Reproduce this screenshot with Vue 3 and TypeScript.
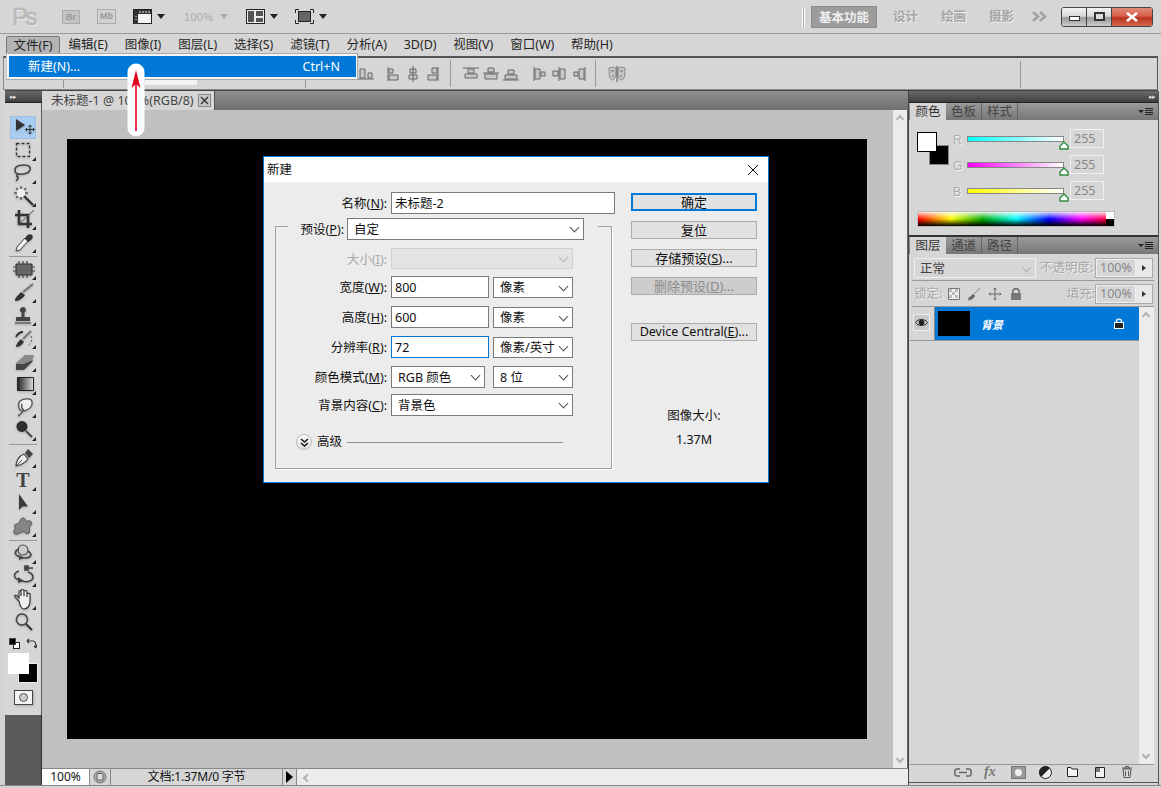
<script setup lang="ts">
interface Shape { d: string; f?: string; s?: string; w?: number; dash?: string }
interface Tool { name: string; flag: boolean; active?: boolean; text?: string; shapes: Shape[] }

const menus = ['文件(F)', '编辑(E)', '图像(I)', '图层(L)', '选择(S)', '滤镜(T)', '分析(A)', '3D(D)', '视图(V)', '窗口(W)', '帮助(H)']
const workspaces = ['设计', '绘画', '摄影']

const dark = '#3f3f3f'
const groups: Tool[][] = [
  [
    { name: 'move', flag: false, active: true, shapes: [
      { d: 'M6 3V15L15 9Z', f: '#333' },
      { d: 'M20 9V18M15.5 13.5H24.5M18.5 10.5L20 9L21.5 10.5M18.5 16.5L20 18L21.5 16.5M17 12L15.5 13.5L17 15M23 12L24.5 13.5L23 15', s: '#333', w: 1, f: 'none' },
    ] },
    { name: 'marquee', flag: true, shapes: [{ d: 'M6.5 4.5H19.5V17.5H6.5Z', s: '#333', w: 1.4, dash: '3 2', f: 'none' }] },
    { name: 'lasso', flag: true, shapes: [
      { d: 'M5 8C5 4 10 3 14 3C19 3 21 5 20 8C19 11 13 13 9 12C6 12 5 10 5 8Z', s: '#444', w: 1.6, f: 'none' },
      { d: 'M9 12C6 13 6 15 8 15C9 16 7 18 6 19', s: '#444', w: 1.6, f: 'none' },
    ] },
    { name: 'wand', flag: true, shapes: [
      { d: 'M7 4H15V12H7Z', f: '#efefef' },
      { d: 'M11 1V4M11 12V15M4 8H7M15 8H18M6 3L8 5M16 3L14 5M6 13L8 11', s: '#555', w: 1.4, f: 'none' },
      { d: 'M14 11L23 20', s: '#333', w: 2.4, f: 'none' },
    ] },
    { name: 'crop', flag: true, shapes: [
      { d: 'M9 2V16H22M5 7H18V20', s: '#333', w: 2.6, f: 'none' },
      { d: 'M8 17L24 2', s: '#555', w: 1, f: 'none' },
    ] },
    { name: 'eyedropper', flag: true, shapes: [
      { d: 'M15 7L7 16L6 20L10 19L18 10Z', f: '#f2f2f2', s: '#444', w: 1 },
      { d: 'M15 8C16 4 20 2 22 4C24 6 22 9 18 11Z', f: '#333' },
    ] },
  ],
  [
    { name: 'healing', flag: true, shapes: [
      { d: 'M6 6H22V17H6Z', f: '#666', s: '#333', w: 1 },
      { d: 'M9 3V6M13 3V6M17 3V6M9 17V20M13 17V20M17 17V20M3 9H6M3 13H6M22 9H25M22 13H25', s: '#444', w: 1.2, f: 'none' },
    ] },
    { name: 'brush', flag: true, shapes: [
      { d: 'M5 20C5 16 8 15 11 11L15 14C12 18 9 20 5 20Z', f: '#333' },
      { d: 'M13 11L23 3', s: '#777', w: 2.2, f: 'none' },
    ] },
    { name: 'stamp', flag: true, shapes: [
      { d: 'M13 3A3 3 0 1 1 12.9 3ZM11.5 8H14.5V13H11.5Z', f: '#444' },
      { d: 'M6 13H20V17H6Z', f: '#444' },
      { d: 'M5 18H21V20H5Z', f: '#777' },
    ] },
    { name: 'history', flag: true, shapes: [
      { d: 'M6 20C6 17 8 15 11 12L14 15C12 18 9 20 6 20Z', f: '#333' },
      { d: 'M13 12L21 4', s: '#777', w: 2, f: 'none' },
      { d: 'M6 10C8 6 11 5 13 5', s: '#333', w: 1.8, f: 'none' },
      { d: 'M21 9C23 13 21 17 17 19', s: '#555', w: 1, dash: '2 2', f: 'none' },
    ] },
    { name: 'eraser', flag: true, shapes: [
      { d: 'M6 13L15 5H24L22 11L14 19H6Z', f: '#8a8a8a' },
      { d: 'M6 14H14V20H6ZM14 14L23 10L22 12L14 20Z', f: '#444' },
    ] },
    { name: 'gradient', flag: true, shapes: [{ d: 'M7.5 4.5H23.5V17.5H7.5Z', f: 'url(#toolGrad)', s: '#222', w: 1 }] },
    { name: 'dodge', flag: true, shapes: [
      { d: 'M10 5C14 2 22 2 22 6C23 11 17 15 13 15C9 15 7 9 10 5Z', f: '#eee', s: '#555', w: 1.3 },
      { d: 'M13 15C12 17 10 19 8 20M12 8C11 11 12 13 14 14', s: '#555', w: 1.5, f: 'none' },
    ] },
    { name: 'burn', flag: true, shapes: [
      { d: 'M12 2A5.5 5.5 0 1 1 11.9 2Z', f: '#2f2f2f' },
      { d: 'M16 12L22 18', s: '#444', w: 1.8, f: 'none' },
    ] },
  ],
  [
    { name: 'pen', flag: true, shapes: [
      { d: 'M14 8L18 13C15 17 11 19 6 20C6 15 9 10 14 8Z', f: '#eee', s: '#444', w: 1.2 },
      { d: 'M15 7L18 3L23 8L19 12Z', f: '#444' },
      { d: 'M6 20L12 14', s: '#444', w: 1, f: 'none' },
    ] },
    { name: 'type', flag: true, text: 'T', shapes: [] },
    { name: 'path', flag: true, shapes: [{ d: 'M9 2V18L12.5 14.5L18 14.5Z', f: '#3a3a3a' }] },
    { name: 'shape', flag: true, shapes: [{ d: 'M7 9C10 9 10 3 13 3C16 3 15 7 18 6C22 5 23 9 20 11C18 13 21 15 19 18C16 20 15 16 12 17C9 18 6 21 4 18C3 15 6 14 5 12C4 10 5 9 7 9Z', f: '#858585', s: '#555', w: 1 }] },
  ],
  [
    { name: '3d-rotate', flag: true, shapes: [
      { d: 'M13 3A5 5 0 1 1 12.9 3Z', f: '#ccc', s: '#555', w: 1.2 },
      { d: 'M9 7C4 9 4 13 10 15C15 17 20 16 21 13C21 11 19 10 18 9', s: '#444', w: 1.6, f: 'none' },
      { d: 'M9 13L14 16L9 18Z', f: '#444' },
    ] },
    { name: '3d-orbit', flag: true, shapes: [
      { d: 'M15 3H23M15 1H18V5H15Z', s: '#444', w: 1.6, f: '#444' },
      { d: 'M9 6C3 8 3 13 9 15C15 18 23 17 23 12C23 10 21 8 18 7', s: '#444', w: 1.6, f: 'none' },
      { d: 'M8 12L14 16L8 18Z', f: '#444' },
    ] },
    { name: 'hand', flag: true, shapes: [{ d: 'M9 13L5 9C4 7 6 7 7 8L9 10V4C9 2 11 2 11 4V8V3C11 1 14 1 14 3V8V4C14 2 17 2 17 4V9V6C17 5 20 5 20 6V14C20 18 17 21 14 21C11 21 10 18 9 13Z', f: '#eee', s: '#333', w: 1.2 }] },
    { name: 'zoom', flag: false, shapes: [
      { d: 'M12 3A5.5 5.5 0 1 1 11.9 3Z', f: 'none', s: '#444', w: 1.5 },
      { d: 'M16 13L22 19', s: '#333', w: 2, f: 'none' },
    ] },
  ],
]

// 文档窗口上方的对齐按钮
const alignGroups = [
  ['M0 13H16M2 3H7V12H2ZM10 7H14V12H10Z'],
  ['M1 1V15M2 3H6V7H2ZM2 9H11V14H2Z', 'M6 0V16M3 3H9V7H3ZM2 9H10V13H2Z', 'M11 1V15M5 2H10V7H5ZM1 9H10V14H1Z'],
  ['M0 2H16M5 3H11V7H5ZM2 8H14V12H2Z', 'M0 7H16M5 2H11V6H5ZM2 8H14V13H2Z', 'M0 14H16M5 4H11V8H5ZM2 9H14V13H2Z'],
  ['M2 1V15M3 3H8V13H3ZM9 6H13V10H9Z', 'M7 1V15M1 5H6V10H1ZM8 3H13V13H8Z', 'M13 1V15M2 6H6V10H2ZM7 3H12V13H7Z'],
]

const colorSliders = [
  { label: 'R', grad: 'linear-gradient(90deg,#00ffff,#fff)' },
  { label: 'G', grad: 'linear-gradient(90deg,#ff00ff,#fff)' },
  { label: 'B', grad: 'linear-gradient(90deg,#ffff00,#fff)' },
]
</script>

<template>
  <div class="app">
    <header class="topbar">
      <span class="ps-logo">Ps</span>
      <span class="bridge br">Br</span>
      <span class="bridge mb">Mb</span>
      <svg class="t-film" width="20" height="16" viewBox="0 0 20 16"><rect x="0.5" y="0.5" width="18" height="14" fill="#f4f4f4" stroke="#222" /><path d="M1 1H18V5H1ZM1 5H5V15H1Z" fill="#333" /><path d="M7 2V4M10 2V4M13 2V4M16 2V4M3 7V8M3 10V11" stroke="#eee" /></svg>
      <i class="drop d1"></i>
      <span class="zoom-pct">100%</span>
      <i class="drop d2"></i>
      <svg class="t-layout" width="20" height="16" viewBox="0 0 20 16"><rect x="0.5" y="0.5" width="18" height="14" fill="#eee" stroke="#222" /><path d="M2 2H8V13H2ZM10 2H17V7H10ZM10 9H17V13H10Z" fill="#555" /></svg>
      <i class="drop d3"></i>
      <svg class="t-screen" width="20" height="16" viewBox="0 0 20 16"><path d="M0.5 4V0.5H4M15 0.5H18.5V4M18.5 11V14.5H15M4 14.5H0.5V11" fill="none" stroke="#222" /><rect x="3.5" y="2.5" width="12" height="10" fill="#666" stroke="#222" /></svg>
      <i class="drop d4"></i>
      <div class="spacer"></div>
      <span class="dbl-line"></span>
      <span class="ws-active">基本功能</span>
      <span v-for="w in workspaces" :key="w" class="ws-item">{{ w }}</span>
      <svg class="ws-more" width="15" height="11" viewBox="0 0 15 11"><path d="M1 1L6 5.5L1 10M8 1L13 5.5L8 10" fill="none" stroke="#a2a2a2" stroke-width="2.6" /></svg>
      <div class="win-btns">
        <span class="win-btn min"><i></i></span>
        <span class="win-btn max"><i></i></span>
        <span class="win-btn close">
          <svg width="14" height="10" viewBox="0 0 14 10"><path d="M2 1L12 9M12 1L2 9" stroke="#fff" stroke-width="2.6" /></svg>
        </span>
      </div>
    </header>

    <nav class="menubar">
      <span v-for="(m, i) in menus" :key="m" class="menu-item" :class="{ open: i === 0 }">{{ m }}</span>
    </nav>

    <section class="optbar">
      <span class="opt-handle"></span>
      <span class="opt-sep first"></span>
      <span class="opt-white"></span>
      <span class="opt-sep second"></span>
      <div class="align-row">
        <template v-for="(g, gi) in alignGroups" :key="gi">
          <div class="align-group">
            <svg v-for="(d, di) in g" :key="di" width="16" height="16" viewBox="0 0 16 16">
              <path :d="d" fill="#c8c8c8" stroke="#666" />
            </svg>
          </div>
          <span v-if="gi === 1" class="align-sep"></span>
        </template>
        <span class="align-sep"></span>
        <svg width="18" height="16" viewBox="0 0 18 16" class="masks">
          <path d="M1 2C3 1 6 1 8 2V9C7 13 5 14 4 14C2 13 1 11 1 2ZM10 2C12 1 15 1 17 2C17 11 16 13 14 14C12 14 10 12 10 9Z" fill="#c4c4c4" stroke="#888" />
          <path d="M3 5H6M12 5H15M4 10H6M12 10H14" stroke="#777" />
          <path d="M9 0V16" stroke="#555" />
        </svg>
      </div>
      <span class="opt-sep last"></span>
    </section>

    <main class="workspace">
      <aside class="toolbox">
        <div class="dock-head"><span class="arrows">▸▸</span></div>
        <div class="tool-body">
          <div class="tool-handle"></div>
          <svg width="0" height="0" class="defs">
            <defs>
              <linearGradient id="toolGrad" x1="0" x2="1" y1="0" y2="0">
                <stop offset="0" stop-color="#222" />
                <stop offset="1" stop-color="#ddd" />
              </linearGradient>
            </defs>
          </svg>
          <template v-for="(grp, gi) in groups" :key="gi">
            <div v-if="gi > 0" class="tool-sep"></div>
            <div v-for="t in grp" :key="t.name" class="tool" :class="{ active: t.active }">
              <span v-if="t.text" class="tool-t">{{ t.text }}</span>
              <svg v-else width="26" height="23" viewBox="0 0 26 23" class="tool-ico">
                <path v-for="(p, pi) in t.shapes" :key="pi" :d="p.d" :fill="p.f ?? dark" :stroke="p.s ?? 'none'" :stroke-width="p.w ?? 0" :stroke-dasharray="p.dash" />
              </svg>
              <i v-if="t.flag" class="flag"></i>
            </div>
          </template>
          <div class="swatch-mini">
            <span class="mini-def"><i></i><b></b></span>
            <svg width="11" height="11" viewBox="0 0 11 11"><path d="M1 3H7C9 3 10 5 10 9M1 3L3 1M1 3L3 5M10 10L8 8M10 10L10.5 7" fill="none" stroke="#333" stroke-width="1.2" /></svg>
          </div>
          <div class="swatch-big"><span class="sw-bg"></span><span class="sw-fg"></span></div>
          <div class="quickmask"><i></i></div>
        </div>
        <div class="tool-foot"></div>
      </aside>

      <div class="doc-area">
        <div class="tabbar">
          <div class="doc-tab">
            <span>未标题-1 @ 100%(RGB/8)</span>
            <span class="tab-x">
              <svg width="9" height="9" viewBox="0 0 9 9"><path d="M1 1L8 8M8 1L1 8" stroke="#333" stroke-width="1.4" /></svg>
            </span>
          </div>
        </div>
        <div class="doc-mid">
          <div class="pasteboard"><div class="canvas"></div></div>
          <div class="vscroll">
            <i class="chev up"></i>
            <i class="chev down"></i>
          </div>
        </div>
        <div class="status">
          <span class="st-zoom">100%</span>
          <span class="st-ico">
            <svg width="14" height="14" viewBox="0 0 14 14"><circle cx="7" cy="7" r="6" fill="#aaa" stroke="#777" /><path d="M4 3.5H9L10 5V10H4Z" fill="#ddd" stroke="#666" /></svg>
          </span>
          <span class="st-doc">文档:1.37M/0 字节</span>
          <span class="st-arrow"><i></i></span>
          <div class="hscroll"><i class="chev left"></i></div>
        </div>
      </div>

      <aside class="panels">
        <div class="dock-head right"><span class="arrows">▸▸</span></div>
        <div class="panel-tabs">
          <span class="ptab on">颜色</span><span class="ptab">色板</span><span class="ptab">样式</span>
          <span class="pmenu"><i class="pm-tri"></i><i class="pm-lines"></i></span>
        </div>
        <div class="color-body">
          <div class="color-main">
            <div class="swatch-pair"><span class="cbg"></span><span class="cfg"></span></div>
            <div class="sliders">
              <div v-for="s in colorSliders" :key="s.label" class="slider-row">
                <span class="sl-label">{{ s.label }}</span>
                <span class="sl-track" :style="{ background: s.grad }">
                  <svg class="sl-thumb" width="10" height="9" viewBox="0 0 10 9"><path d="M5 1L9 5V8H1V5Z" fill="#fff" stroke="#2e8b3e" stroke-width="1.4" /></svg>
                </span>
                <span class="sl-val">255</span>
              </div>
            </div>
          </div>
          <div class="spectrum"><span class="spec-end"></span></div>
        </div>

        <div class="panel-tabs second">
          <span class="ptab on">图层</span><span class="ptab">通道</span><span class="ptab">路径</span>
          <span class="pmenu"><i class="pm-tri"></i><i class="pm-lines"></i></span>
        </div>
        <div class="layers-body">
          <div class="lay-row blend">
            <span class="blend-sel">正常<i class="sel-chev light"></i></span>
            <span class="emb w-op">不透明度:</span>
            <span class="pct-box"><b>100%</b><i></i></span>
          </div>
          <div class="lay-row lock">
            <span class="emb">锁定:</span>
            <svg class="lock-ico" width="75" height="14" viewBox="0 0 75 14">
              <path d="M0.5 1.5H11.5V12.5H0.5Z" fill="#eee" stroke="#777" />
              <path d="M1 2H4V5H1ZM7 2H10V5H7ZM4 5H7V8H4ZM1 8H4V11H1ZM7 8H10V11H7Z" fill="#bbb" />
              <path d="M20 13C20 10 23 10 25 7L27 9C25 12 23 13 20 13ZM26 7L32 1" stroke="#888" fill="#666" />
              <path d="M47 1V13M41 7H53M45.5 2.5L47 1L48.5 2.5M45.5 11.5L47 13L48.5 11.5M42.5 5.5L41 7L42.5 8.5M51.5 5.5L53 7L51.5 8.5" stroke="#666" fill="none" />
              <path d="M65 6V4C65 1 71 1 71 4V6" stroke="#666" fill="none" stroke-width="1.4" />
              <rect x="63" y="6" width="10" height="7" fill="#777" />
            </svg>
            <span class="spacer"></span>
            <span class="emb">填充:</span>
            <span class="pct-box fill"><b>100%</b><i></i></span>
          </div>
          <div class="lay-list">
            <div class="lay-main">
              <div class="layer">
                <span class="eye">
                  <svg width="13" height="9" viewBox="0 0 13 9"><path d="M0.5 4.5C3 0.5 10 0.5 12.5 4.5C10 8.5 3 8.5 0.5 4.5Z" fill="#ccc" stroke="#222" /><circle cx="6.5" cy="4.5" r="2.8" fill="#222" /></svg>
                </span>
                <div class="layer-sel">
                  <span class="thumb"></span>
                  <span class="lname">背景</span>
                  <svg class="llock" width="10" height="11" viewBox="0 0 10 11"><path d="M2.5 5V3C2.5 0.5 7.5 0.5 7.5 3V5" fill="none" stroke="#fff" stroke-width="1.4" /><rect x="0.5" y="4.5" width="9" height="6" fill="#222" stroke="#fff" /></svg>
                </div>
              </div>
            </div>
            <div class="lay-scroll"><i class="chev up"></i><i class="chev down"></i></div>
          </div>
          <div class="lay-foot">
            <svg width="18" height="9" viewBox="0 0 18 9"><path d="M6 1H3C0 1 0 8 3 8H6M12 1H15C18 1 18 8 15 8H12M5 4.5H13" fill="none" stroke="#666" stroke-width="1.5" /></svg>
            <span class="fx">fx</span>
            <span class="ft-mask"><i></i></span>
            <svg width="13" height="13" viewBox="0 0 13 13"><circle cx="6.5" cy="6.5" r="6" fill="#eee" stroke="#222" /><path d="M11 2A6 6 0 0 0 2 11Z" fill="#222" /></svg>
            <svg width="11" height="10" viewBox="0 0 11 10" class="ft-folder"><path d="M0.5 0.5H4L5 2H10.5V9.5H0.5Z" fill="#f2f2f2" stroke="#222" /></svg>
            <svg width="10" height="11" viewBox="0 0 10 11" class="ft-new"><path d="M0.5 0.5H9.5V10.5H0.5Z" fill="#f2f2f2" stroke="#222" /><path d="M1 1H5V5H1Z" fill="#777" /></svg>
            <svg width="10" height="12" viewBox="0 0 10 12" class="ft-trash"><path d="M1 3H9L8 11.5H2ZM0 2H10M3.5 2V0.5H6.5V2M3.5 5V10M6.5 5V10" fill="#ddd" stroke="#555" /></svg>
          </div>
        </div>
      </aside>
    </main>
    <div class="win-foot"></div>

    <!-- 打开的文件菜单 -->
    <div class="file-menu">
      <div class="fm-item"><span>新建(N)...</span><span>Ctrl+N</span></div>
    </div>

    <svg class="pointer" width="24" height="80" viewBox="0 0 24 80">
      <path d="M12 12V68" stroke="#fff" stroke-width="17" stroke-linecap="round" />
      <path d="M12 14V71" stroke="#e4001b" stroke-width="1.6" />
      <path d="M12 10L7.5 28L12 24L16.5 28Z" fill="#e4001b" />
    </svg>

    <div class="dialog">
      <div class="dlg-title">
        <span>新建</span>
        <svg width="12" height="12" viewBox="0 0 12 12"><path d="M1 1L11 11M11 1L1 11" stroke="#111" stroke-width="1" /></svg>
      </div>
      <div class="dlg-body">
        <div class="dlg-left">
          <div class="f-row name-row">
            <label class="f-label">名称(<u>N</u>):</label>
            <span class="inp name-inp">未标题-2</span>
          </div>
          <div class="frame">
            <div class="preset-row">
              <label class="f-label pre-label">预设(<u>P</u>):</label>
              <span class="sel preset-sel">自定<i class="sel-chev"></i></span>
            </div>
            <div class="f-row size-row">
              <label class="f-label dis">大小(<u>I</u>):</label>
              <span class="sel size-sel"><i class="sel-chev light"></i></span>
            </div>
            <div class="f-row wh-row">
              <label class="f-label">宽度(<u>W</u>):</label>
              <span class="inp num">800</span>
              <span class="sel unit">像素<i class="sel-chev"></i></span>
            </div>
            <div class="f-row wh-row">
              <label class="f-label">高度(<u>H</u>):</label>
              <span class="inp num">600</span>
              <span class="sel unit">像素<i class="sel-chev"></i></span>
            </div>
            <div class="f-row wh-row">
              <label class="f-label">分辨率(<u>R</u>):</label>
              <span class="inp num focus">72</span>
              <span class="sel unit">像素/英寸<i class="sel-chev"></i></span>
            </div>
            <div class="f-row wh-row">
              <label class="f-label">颜色模式(<u>M</u>):</label>
              <span class="sel mode">RGB 颜色<i class="sel-chev"></i></span>
              <span class="sel unit">8 位<i class="sel-chev"></i></span>
            </div>
            <div class="f-row bg-row">
              <label class="f-label">背景内容(<u>C</u>):</label>
              <span class="sel bg-sel">背景色<i class="sel-chev"></i></span>
            </div>
            <div class="adv-row">
              <span class="adv-btn">
                <svg width="9" height="9" viewBox="0 0 9 9"><path d="M1 1L4.5 4L8 1M1 5L4.5 8L8 5" fill="none" stroke="#111" stroke-width="1.5" /></svg>
              </span>
              <span class="adv-txt">高级</span>
              <span class="adv-line"></span>
            </div>
          </div>
        </div>
        <div class="dlg-right">
          <button class="btn primary">确定</button>
          <button class="btn">复位</button>
          <button class="btn">存储预设(<u>S</u>)...</button>
          <button class="btn off">删除预设(<u>D</u>)...</button>
          <button class="btn device">Device Central(<u>E</u>)...</button>
          <div class="img-size">
            <span>图像大小:</span>
            <span class="img-val">1.37M</span>
          </div>
        </div>
      </div>
    </div>
  </div>
</template>

<style scoped>
.app {
  position: relative; width: 1161px; height: 788px; overflow: hidden;
  background: #d4d4d4; color: #222;
  font: 12.5px/16px "Noto Sans", "Noto Sans CJK SC", sans-serif;
  display: flex; flex-direction: column;
}
.spacer { flex: 1; }
i { display: block; font-style: normal; }

/* 顶部栏 */
.topbar { height: 33px; flex: none; display: flex; align-items: center; padding: 0 8px 0 12px; border-bottom: 1px solid #999; background: #d6d6d6; box-sizing: content-box; }
.ps-logo { width: 50px; font: 24px/24px "Liberation Sans", sans-serif; letter-spacing: -2.5px; color: #bdbdbd; -webkit-text-stroke: 0.6px #b4b4b4; text-shadow: 1px 1px 0 #eee; }
.bridge { width: 16px; height: 12px; font: bold 9px/12px "Liberation Sans", sans-serif; text-align: center; color: #999; background: #c4c4c4; border: 1px solid #aaa; }
.mb { width: 17px; margin-left: 17px; background: #d2d2d2; height: 13px; }
.t-film { margin-left: 17px; }
.drop { width: 0; height: 0; border-left: 4px solid transparent; border-right: 4px solid transparent; border-top: 5px solid #222; }
.d1 { margin-left: 4px; }
.zoom-pct { margin-left: 19px; width: 36px; font: 11px/14px "Liberation Sans", sans-serif; color: #aaa; letter-spacing: 0.3px; }
.d2 { border-top-color: #aaa; }
.t-layout { margin-left: 18px; }
.d3 { margin-left: 4px; }
.t-screen { margin-left: 17px; }
.d4 { margin-left: 4px; }
.dbl-line { width: 1px; height: 20px; border-left: 1px solid #fff; border-right: 1px solid #fff; background: #aaa; margin-right: 6px; }
.ws-active { width: 66px; height: 22px; line-height: 22px; text-align: center; background: #9c9c9c; border: 1px solid #8a8a8a; box-sizing: border-box; color: #f0f0f0; font-weight: 700; white-space: nowrap; }
.ws-item { margin-left: 16px; margin-right: 9px; width: 23px; white-space: nowrap; color: #a4a4a4; font-weight: 700; text-shadow: 1px 1px 0 #eee; }
.ws-more { margin-left: 11px; flex: none; }
.win-btns { display: flex; margin-left: 14px; height: 18px; border: 1px solid #444; border-radius: 3px; overflow: hidden; }
.win-btn { width: 25px; display: flex; align-items: center; justify-content: center; background: linear-gradient(#f2f2f2, #d8d8d8 45%, #999 55%, #ccc); border-right: 1px solid #444; box-sizing: border-box; }
.win-btn.min i { width: 11px; height: 5px; background: #fff; border: 1px solid #333; margin-top: 4px; box-sizing: border-box; }
.win-btn.max i { width: 11px; height: 9px; border: 2px solid #333; background: #ddd; box-sizing: border-box; }
.win-btn.close { width: 40px; border: 0; background: linear-gradient(#e28a78, #d4604c 45%, #b8321e 55%, #d66a52); }

/* 菜单栏 */
.menubar { height: 22px; flex: none; display: flex; align-items: center; padding-left: 6px; background: #d6d6d6; }
.menu-item { padding: 0 8.4px; white-space: nowrap; color: #262626; }
.menu-item.open { background: #b4b4b4; border: 1px solid #777; border-radius: 2px; line-height: 17px; padding: 0 6.5px; }

/* 选项栏 */
.optbar { position: relative; height: 34px; flex: none; box-sizing: border-box; display: flex; align-items: center; margin: 0 3px 0 3px; border: 1px solid #888; border-top: 2px solid #555; border-right-color: #555; background: #d6d6d6; }
.opt-handle { position: absolute; left: 5px; top: 22px; width: 4px; height: 6px; background: radial-gradient(circle, #888 35%, transparent 40%) 0 0 / 2px 2px; }
.opt-sep { position: absolute; top: 3px; height: 27px; width: 1px; background: #999; }
.opt-sep.first { left: 59px; }
.opt-sep.second { left: 301px; }
.opt-sep.last { left: 1016px; }
.opt-white { position: absolute; left: 141px; top: 21px; width: 52px; height: 6px; background: #f4f4f4; }
.align-row { display: flex; align-items: center; margin-left: 354px; gap: 13px; }
.align-group { display: flex; align-items: center; gap: 4px; }
.align-sep { width: 1px; height: 27px; background: #999; margin: 0 -1px 0 -6px; }

/* 工作区 */
.workspace { flex: 1; display: flex; margin-left: 5px; margin-right: 3px; background: #444; padding-top: 1px; min-height: 0; }
.dock-head { height: 12px; flex: none; box-sizing: border-box; background: linear-gradient(#6a6a6a, #3f3f3f); display: flex; align-items: center; padding-left: 5px; border-bottom: 1px solid #222; }
.dock-head.right { justify-content: flex-end; padding: 0 3px 0 0; }
.arrows { font-size: 7px; line-height: 10px; letter-spacing: -1px; color: #ddd; }

.toolbox { width: 37px; flex: none; display: flex; flex-direction: column; }
.tool-body { height: 612px; flex: none; background: #d6d6d6; border-right: 1px solid #555; box-sizing: border-box; display: flex; flex-direction: column; align-items: center; }
.tool-handle { width: 26px; height: 3px; margin: 2px 0 8px; background: radial-gradient(circle, #888 40%, transparent 45%) 0 0 / 2px 1.5px; flex: none; }
.defs { position: absolute; }
.tool { position: relative; width: 26px; height: 23px; flex: none; }
.tool.active { background: #a8cdf0; border: 1px solid #9cc0e0; box-sizing: border-box; }
.tool.active .tool-ico { margin: -1px; }
.tool-ico { display: block; filter: drop-shadow(0 1px 1px rgba(0, 0, 0, 0.2)); }
.tool-t { display: block; text-align: center; font: bold 20px/23px "Liberation Serif", serif; color: #444; }
.flag { position: absolute; right: 0; bottom: 1px; width: 0; height: 0; border-left: 4px solid transparent; border-bottom: 4px solid #222; }
.tool-sep { width: 28px; height: 1px; margin: 1.5px 0; background: #999; flex: none; }
.swatch-mini { width: 28px; height: 12px; margin-top: 3px; display: flex; justify-content: space-between; align-items: center; flex: none; }
.mini-def { position: relative; width: 11px; height: 11px; }
.mini-def i { position: absolute; right: 0; bottom: 0; width: 7px; height: 7px; background: #fff; border: 1px solid #222; box-sizing: border-box; }
.mini-def b { position: absolute; left: 0; top: 0; width: 7px; height: 7px; background: #000; border: 1px solid #444; box-sizing: border-box; }
.swatch-big { position: relative; width: 30px; height: 30px; margin-top: 4px; flex: none; }
.sw-bg { position: absolute; right: 0; bottom: 0; width: 20px; height: 20px; background: #000; border: 1px solid #eee; box-sizing: border-box; }
.sw-fg { position: absolute; left: 0; top: 0; width: 21px; height: 21px; background: #fff; }
.quickmask { width: 17px; height: 13px; margin-top: 7px; background: #f4f4f4; border: 1px solid #444; display: flex; align-items: center; justify-content: center; flex: none; box-shadow: 1px 1px 2px rgba(0,0,0,.2); }
.quickmask i { width: 9px; height: 9px; border-radius: 50%; background: #ccc; border: 1px solid #555; box-sizing: border-box; }
.tool-foot { flex: 1; background: #5a5a5a; border-right: 1px solid #333; }

/* 文档窗口 */
.doc-area { width: 866px; flex: none; display: flex; flex-direction: column; }
.tabbar { height: 19px; flex: none; background: linear-gradient(#8f8f8f, #6f6f6f); display: flex; }
.doc-tab { width: 173px; background: #d6d6d6; display: flex; align-items: center; gap: 4px; padding-left: 9px; box-sizing: border-box; color: #444; border-right: 1px solid #555; white-space: nowrap; }
.tab-x { width: 13px; height: 13px; flex: none; display: flex; align-items: center; justify-content: center; border: 1px solid #888; background: #c8c8c8; box-sizing: border-box; }
.doc-mid { flex: 1; display: flex; min-height: 0; }
.pasteboard { flex: 1; background: #c0c0c0; padding: 29px 0 0 25px; }
.canvas { width: 800px; height: 600px; background: #000; }
.vscroll { position: relative; width: 14px; background: #ececec; border-right: 1px solid #666; }
.chev { position: absolute; width: 6px; height: 6px; border: solid #b4b4b4; border-width: 2px 0 0 2px; box-sizing: border-box; }
.chev.up { left: 4px; top: 6px; transform: rotate(45deg); }
.chev.down { left: 4px; bottom: 6px; transform: rotate(225deg); }
.chev.left { left: 7px; top: 6px; transform: rotate(-45deg); }
.status { height: 17px; flex: none; display: flex; background: #d6d6d6; border-top: 1px solid #888; box-sizing: border-box; font-size: 12px; }
.st-zoom { width: 47px; background: #fff; text-align: center; color: #111; line-height: 16px; }
.st-ico { width: 22px; display: flex; align-items: center; justify-content: center; border-right: 1px solid #888; border-left: 1px solid #888; box-sizing: border-box; }
.st-doc { width: 172px; text-align: center; color: #111; border-right: 1px solid #888; box-sizing: border-box; line-height: 16px; letter-spacing: -0.2px; }
.st-arrow { width: 14px; display: flex; align-items: center; justify-content: center; border-right: 1px solid #888; box-sizing: border-box; }
.st-arrow i { width: 0; height: 0; border-top: 6px solid transparent; border-bottom: 6px solid transparent; border-left: 7px solid #000; }
.hscroll { position: relative; flex: 1; background: #ececec; }

/* 右侧面板 */
.panels { width: 250px; flex: none; margin-left: 1px; display: flex; flex-direction: column; border-right: 1px solid #555; box-sizing: border-box; background: #d4d4d4; }
.panel-tabs { position: relative; height: 17px; flex: none; display: flex; background: linear-gradient(#9a9a9a, #777); padding-left: 1px; }
.panel-tabs.second { border-top: 2px solid #333; box-sizing: content-box; }
.ptab { width: 36px; text-align: center; line-height: 17px; color: #444; border-right: 1px solid #666; box-sizing: border-box; }
.ptab.on { background: #d6d6d6; color: #333; border-right: 0; }
.pmenu { position: absolute; right: 5px; top: 5px; display: flex; align-items: center; gap: 1px; }
.pm-tri { width: 0; height: 0; border-left: 3px solid transparent; border-right: 3px solid transparent; border-top: 3px solid #222; }
.pm-lines { width: 8px; height: 7px; background: repeating-linear-gradient(#222 0 1px, transparent 1px 2px); }
.color-body { height: 115px; flex: none; background: #d6d6d6; padding: 12px 0 0 8px; box-sizing: border-box; }
.color-main { display: flex; height: 79px; }
.swatch-pair { position: relative; width: 32px; height: 33px; flex: none; }
.cfg { position: absolute; left: 0; top: 0; width: 20px; height: 20px; background: #fff; border: 1px solid #000; box-sizing: border-box; }
.cbg { position: absolute; left: 12px; top: 13px; width: 20px; height: 20px; background: #000; border: 1px solid #888; box-sizing: border-box; }
.sliders { margin-left: 4px; margin-top: -3px; display: flex; flex-direction: column; gap: 7px; }
.slider-row { display: flex; align-items: center; height: 19px; }
.sl-label { width: 14px; margin-top: 2px; font: 12px "Liberation Sans", sans-serif; color: #aaa; text-shadow: 1px 1px 0 #f4f4f4; }
.sl-track { position: relative; width: 97px; height: 6px; border: 1px solid #888; box-sizing: border-box; margin-top: 1px; }
.sl-thumb { position: absolute; right: -6px; top: 4px; display: block; }
.sl-val { width: 34px; height: 19px; margin-left: 6px; border: 1px solid #f0f0f0; box-sizing: border-box; padding-left: 3px; line-height: 17px; color: #888; }
.spectrum { position: relative; width: 198px; height: 16px; border: 1px solid #bbb; box-sizing: border-box; background: linear-gradient(rgba(255,255,255,.85), transparent 50%, #000), linear-gradient(90deg, #f00, #ff0 17%, #0a0 33%, #0ff 50%, #00f 67%, #f0f 83%, #f00); }
.spec-end { position: absolute; right: 0; top: 0; width: 8px; height: 14px; background: linear-gradient(#fff 50%, #000 50%); }

.layers-body { flex: 1; display: flex; flex-direction: column; background: #d6d6d6; padding: 0 4px 0 1px; min-height: 0; border-bottom: 1px solid #555; margin-bottom: 2px; }
.lay-row { display: flex; align-items: center; flex: none; margin-left: 2px; }
.lay-row.blend { height: 27px; border-bottom: 1px solid #999; padding: 1px 0 0 2px; box-sizing: border-box; }
.lay-row.lock { height: 26px; border-bottom: 1px solid #999; box-sizing: border-box; padding: 1px 0 0 2px; }
.blend-sel { position: relative; width: 122px; height: 20px; border: 1px solid #eee; box-sizing: border-box; line-height: 20px; padding-left: 5px; color: #444; }
.emb { color: #a6a6a6; text-shadow: 1px 1px 0 #f0f0f0; white-space: nowrap; }
.w-op { margin-left: 4px; width: 55px; }
.pct-box { width: 58px; height: 20px; display: flex; border: 1px solid #aaa; box-sizing: border-box; background: #e8e8e8; margin-right: 1px; }
.pct-box b { width: 40px; font-weight: 400; border: 1px solid #f0f0f0; background: #d6d6d6; padding-left: 3px; box-sizing: border-box; line-height: 16px; color: #888; }
.pct-box i { margin: 6px 0 0 6px; width: 0; height: 0; border-top: 3px solid transparent; border-bottom: 3px solid transparent; border-left: 4px solid #333; }
.lock-ico { margin-left: 6px; }
.lay-list { flex: 1; display: flex; min-height: 0; border-bottom: 1px solid #999; }
.lay-main { flex: 1; }
.layer { height: 33px; display: flex; border-bottom: 1px solid #999; box-sizing: content-box; }
.eye { width: 17px; height: 17px; margin: 7px 4px 0 3px; display: flex; align-items: center; justify-content: center; background: #c8c8c8; border: 1px solid #eee; box-sizing: border-box; }
.layer-sel { flex: 1; background: #0078d7; display: flex; align-items: center; padding-left: 3px; border-left: 1px solid #888; }
.thumb { width: 32px; height: 25px; background: #000; }
.lname { margin-left: 11px; font: italic 700 11px/14px "Noto Sans CJK SC", sans-serif; color: #fff; }
.llock { margin-left: auto; margin-right: 15px; }
.lay-scroll { position: relative; width: 15px; background: #ececec; }
.lay-foot { height: 17px; flex: none; display: flex; align-items: center; padding: 0 0 3px 44px; box-sizing: border-box; }
.lay-foot svg { flex: none; }
.fx { margin-left: 12px; width: 22px; font: italic bold 14px/14px "Liberation Serif", serif; color: #777; }
.ft-mask { width: 13px; height: 11px; margin-left: 5px; background: #999; border: 1px solid #777; display: flex; align-items: center; justify-content: center; }
.ft-mask i { width: 7px; height: 7px; border-radius: 50%; background: #eee; }
.lay-foot > svg:nth-of-type(2) { margin-left: 13px; }
.ft-folder { margin-left: 15px; }
.ft-new { margin-left: 17px; }
.ft-trash { margin-left: 17px; }
.win-foot { height: 3px; flex: none; background: #d4d4d4; border-top: 1px solid #888; box-sizing: border-box; }

/* 文件菜单与箭头 */
.file-menu { position: absolute; left: 6px; top: 53px; width: 352px; height: 27px; background: #f4f4f4; border: 1px solid #aaa; border-left-color: #ccc; box-sizing: border-box; padding: 2px 1px 2px 2px; }
.fm-item { height: 21px; background: #0078d7; color: #fff; display: flex; justify-content: space-between; align-items: center; padding: 0 16px 0 19px; }
.pointer { position: absolute; left: 124px; top: 60px; }

/* 新建对话框 */
.dialog { position: absolute; left: 263px; top: 156px; width: 506px; height: 327px; box-sizing: border-box; background: #ececec; border: 1px solid #0078d7; color: #111; display: flex; flex-direction: column; }
.dlg-title { height: 25px; flex: none; background: #fff; display: flex; align-items: center; justify-content: space-between; padding: 0 9px 0 3px; }
.dlg-body { flex: 1; display: flex; }
.dlg-left { width: 367px; flex: none; }
.f-row { display: flex; align-items: center; }
.f-label { white-space: nowrap; text-align: right; padding-top: 1px; }
.f-label.dis { color: #a8a8a8; padding-top: 2px; }
.name-row { height: 22px; margin-top: 10px; }
.name-row .f-label { width: 123px; }
.inp { height: 22px; border: 1px solid #7a7a7a; background: #fff; box-sizing: border-box; line-height: 21px; padding-left: 3px; }
.name-inp { width: 224px; margin-left: 4px; }
.frame { position: relative; margin: 12px 0 0 11px; width: 337px; height: 243px; border: 1px solid #a0a0a0; box-shadow: 1px 1px 0 #fff; box-sizing: border-box; }
.preset-row { display: flex; align-items: center; height: 22px; margin-top: -9px; margin-left: 12px; width: 310px; background: #ececec; }
.pre-label { width: 56px; }
.sel { position: relative; display: block; height: 22px; border: 1px solid #7a7a7a; background: #fff; box-sizing: border-box; line-height: 21px; padding-left: 6px; white-space: nowrap; }
.preset-sel { width: 237px; margin-left: 3px; }
.sel-chev { position: absolute; right: 5px; top: 5px; width: 7px; height: 7px; border: solid #555; border-width: 0 1.2px 1.2px 0; transform: rotate(45deg); box-sizing: border-box; }
.sel-chev.light { border-color: #b4b4b4; }
.f-row .f-label { flex: none; }
.frame .f-label:not(.pre-label) { width: 111px; }
.size-row { margin-top: 8px; height: 21px; }
.size-sel { width: 182px; height: 21px; margin-left: 4px; background: #e4e4e4; border-color: #d0d0d0; }
.wh-row { height: 22px; margin-top: 8px; }
.size-row + .wh-row { margin-top: 7px; }
.num { width: 98px; margin-left: 4px; }
.num.focus { border-color: #0078d7; }
.unit { width: 80px; margin-left: 4px; padding-left: 6px; }
.num + .unit { height: 21px; margin-top: 1px; line-height: 20px; }
.mode { width: 94px; margin-left: 4px; }
.mode + .unit { margin-left: 8px; }
.bg-row { height: 22px; margin-top: 6px; }
.bg-sel { width: 182px; margin-left: 4px; }
.adv-row { display: flex; align-items: center; height: 18px; margin: 17px 0 0 20px; }
.adv-btn { width: 16px; height: 16px; border-radius: 50%; background: linear-gradient(#fff, #ddd); border: 1px solid #bbb; box-sizing: border-box; display: flex; align-items: center; justify-content: center; }
.adv-txt { margin-left: 5px; }
.adv-line { width: 216px; height: 1px; background: #909090; margin-left: 5px; }
.dlg-right { display: flex; flex-direction: column; align-items: flex-start; padding-top: 1px; }
.btn { width: 126px; height: 18px; margin-top: 10px; padding: 0; background: #e1e1e1; border: 1px solid #adadad; font: inherit; font-size: 13px; color: #111; line-height: 16px; white-space: nowrap; }
.btn.primary { border: 2px solid #0078d7; line-height: 14px; }
.btn.off { background: #cdcdcd; color: #8c8c8c; }
.btn.device { margin-top: 28px; font-size: 12.5px; }
.img-size { width: 126px; margin-top: 67px; display: flex; flex-direction: column; align-items: center; gap: 8px; }
</style>

<style>
html, body { margin: 0; background: #d4d4d4; }
</style>
